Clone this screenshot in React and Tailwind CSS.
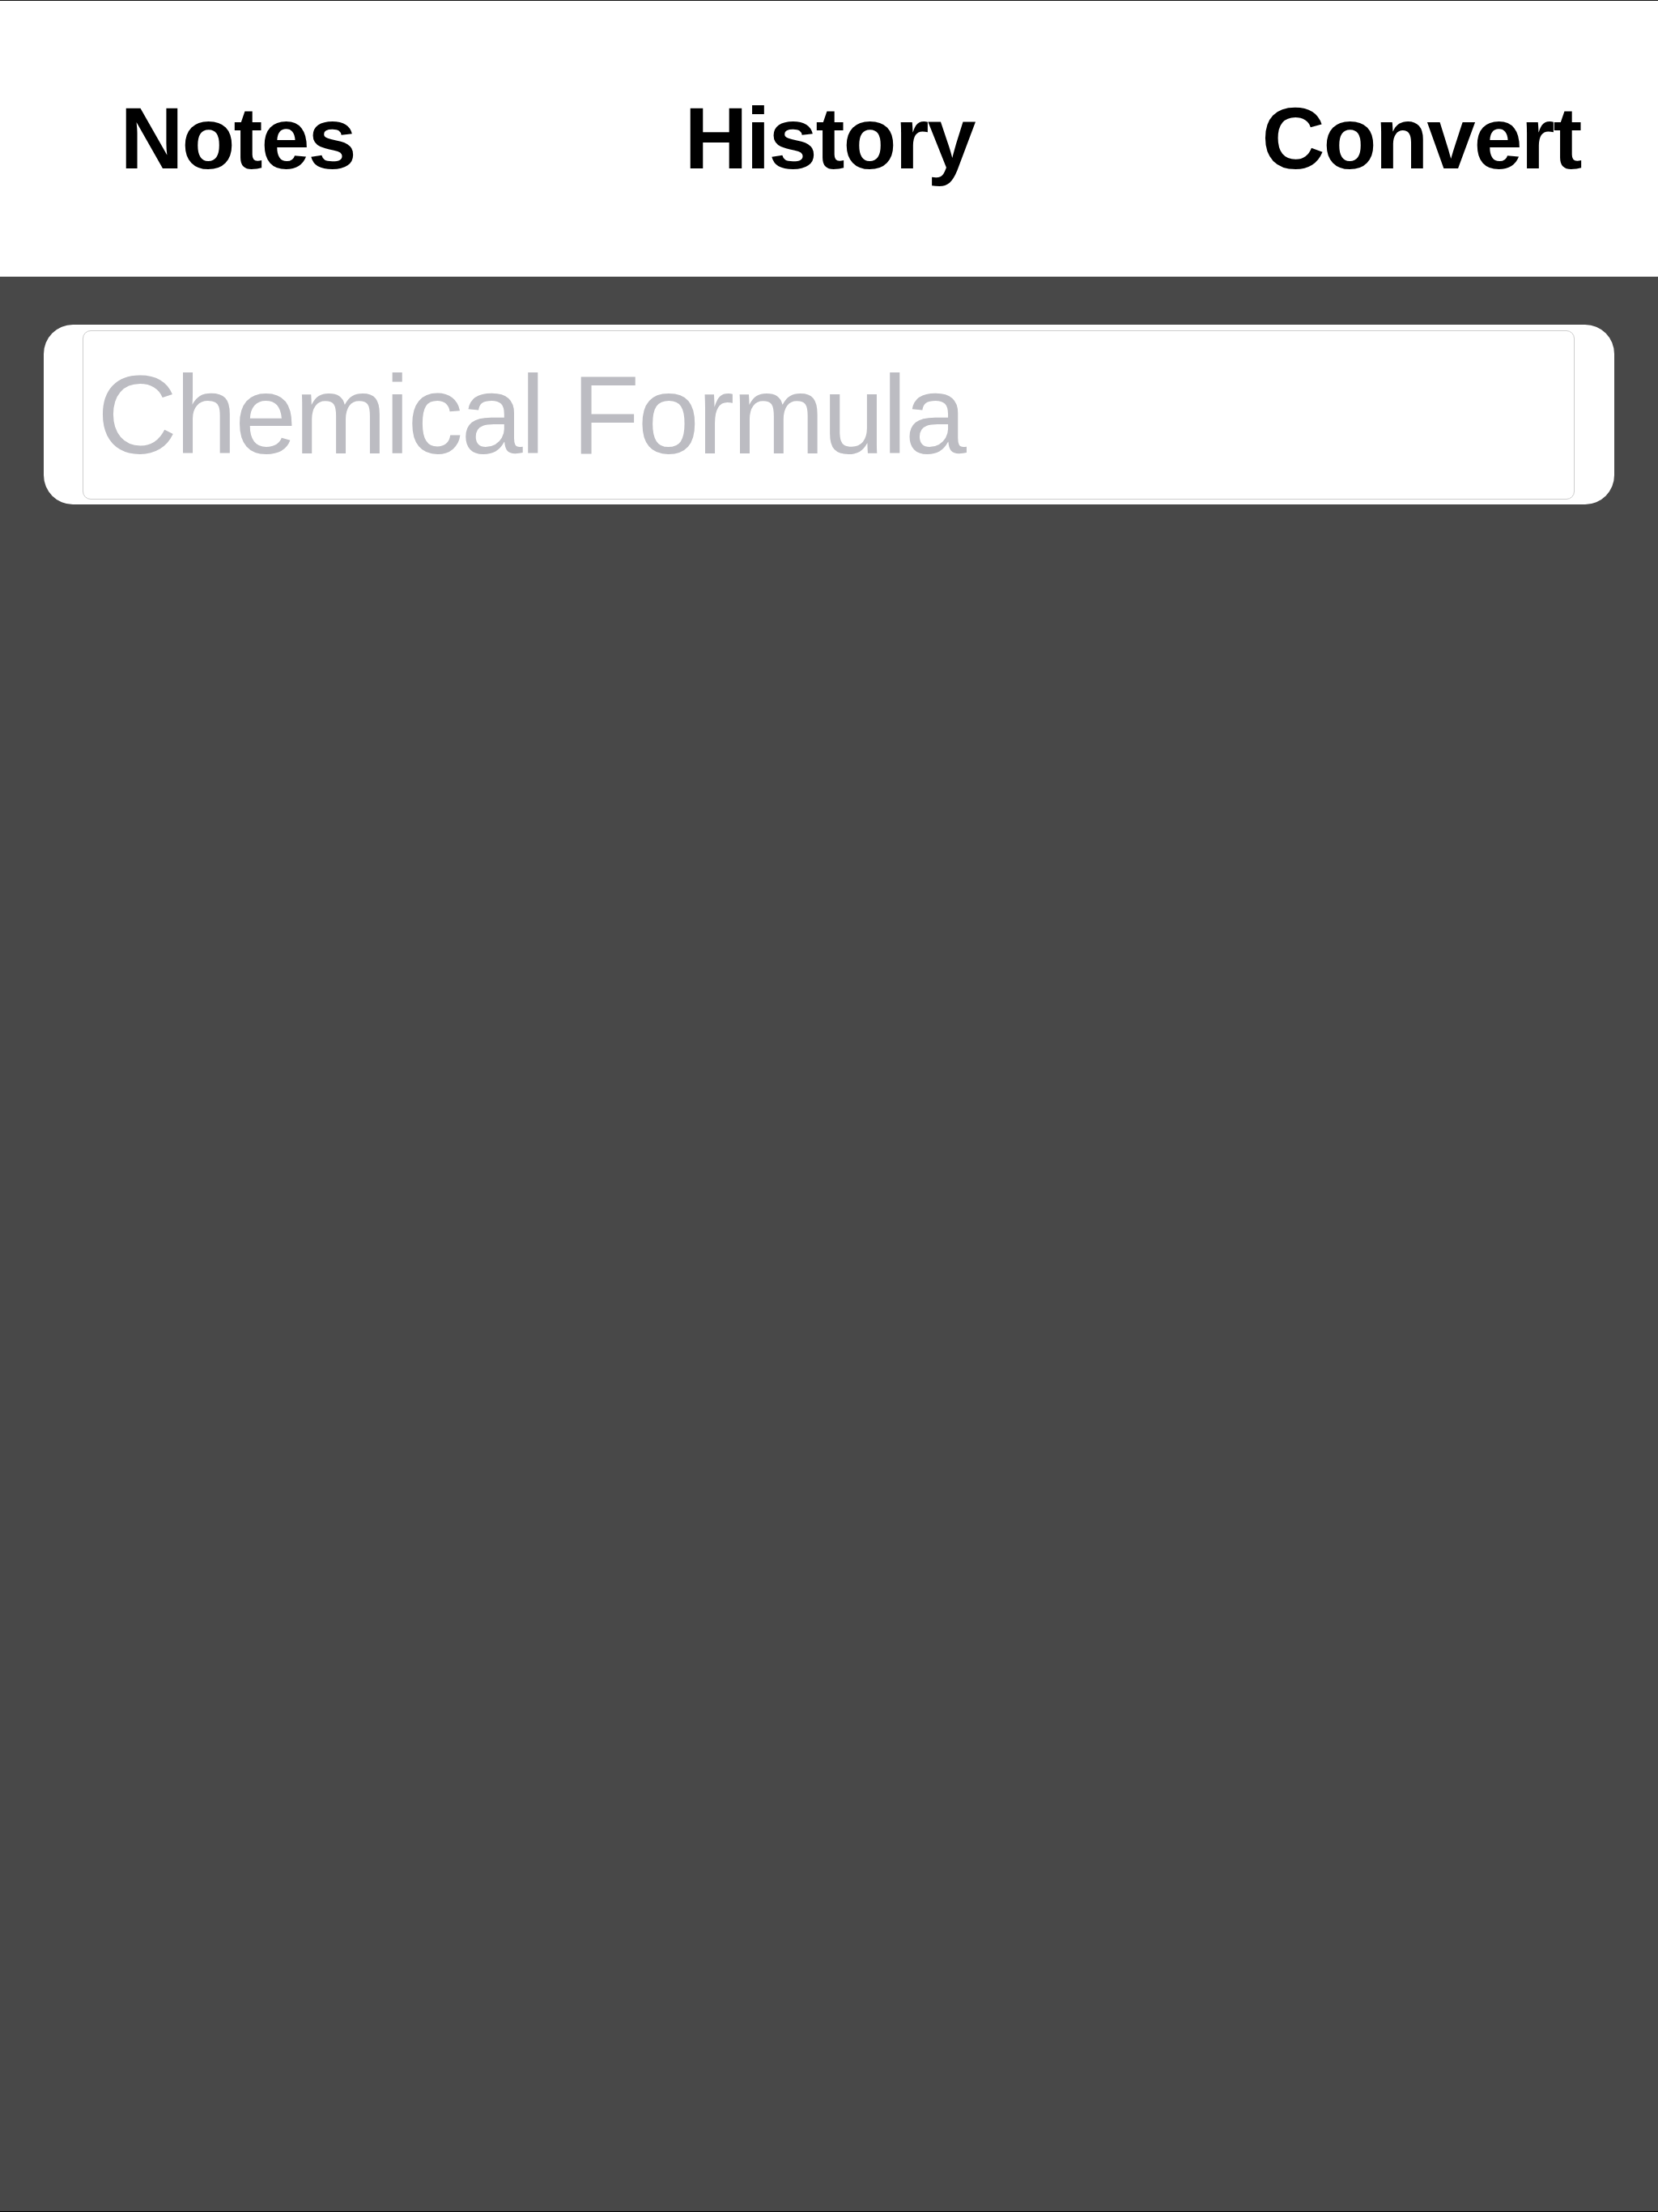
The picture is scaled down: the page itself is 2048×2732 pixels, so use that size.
import React, { useState } from "react";

const tabs = ["Notes", "History", "Convert"];

const App = () => {
    const [formula, setFormula] = useState("");

    return (
        <div className="w-[2048px] h-[2732px] flex flex-col bg-[#484848] font-['Liberation_Sans',Arial,sans-serif] overflow-hidden">
            {/* Top tab bar */}
            <div className="h-[342px] shrink-0 bg-white border-t border-t-[#111111] border-b border-b-[#c9c9c9] overflow-hidden flex items-center">
                <div className="grid grid-cols-3 w-[2193px] -ml-[72px] shrink-0">
                    {tabs.map((tab) => (
                        <button
                            key={tab}
                            className="text-center text-[108px] leading-none font-bold tracking-[-2px] text-black"
                        >
                            {tab}
                        </button>
                    ))}
                </div>
            </div>

            {/* Content */}
            <div className="flex-1 border-b border-b-black px-[54px] pt-[59px]">
                <div className="bg-white rounded-[36px] pl-[48px] pr-[49px] pt-[7px] pb-[6px]">
                    <input
                        type="text"
                        value={formula}
                        onChange={(e) => setFormula(e.target.value)}
                        placeholder="Chemical Formula"
                        className="w-full h-[209px] block border border-[#cdcdcd] rounded-[10px] pl-[17px] bg-white text-[137px] tracking-[-2.5px] text-black placeholder:text-[#bcbcc2] outline-none font-['Liberation_Sans',Arial,sans-serif]"
                    />
                </div>
            </div>
        </div>
    );
};

export default App;
